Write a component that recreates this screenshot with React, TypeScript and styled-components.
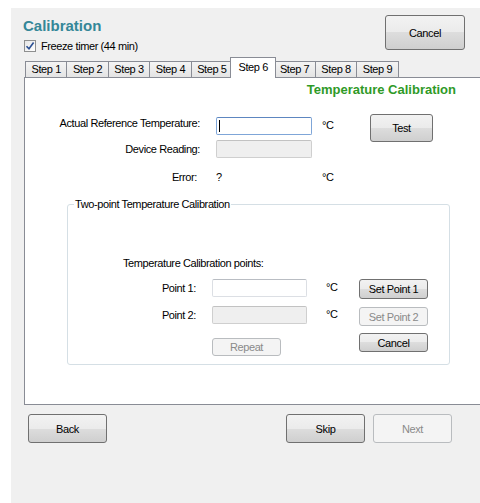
import React from "react";
import styled, { createGlobalStyle, css } from "styled-components";

const GlobalStyle = createGlobalStyle`
  html, body {
    margin: 0;
    padding: 0;
    background: #ffffff;
  }
  body {
    font-family: "Liberation Sans", Arial, sans-serif;
    font-size: 11px;
    color: #000000;
    letter-spacing: -0.4px;
  }
  * {
    box-sizing: border-box;
  }
`;

const Window = styled.div`
  margin: 8px 0 0 11px;
  width: 469px;
  height: 495px;
  background: #f0f0f0;
  overflow: hidden;
`;

const Header = styled.div`
  display: flex;
  justify-content: space-between;
  align-items: flex-start;
  height: 45px;
  padding: 0 15px 0 12px;
`;

const TitleBlock = styled.div`
  padding-top: 9px;
`;

const Title = styled.h1`
  margin: 0;
  font-size: 15px;
  line-height: 18px;
  font-weight: bold;
  letter-spacing: 0;
  color: #348798;
`;

const CheckRow = styled.label`
  display: flex;
  align-items: center;
  gap: 5px;
  height: 14px;
  margin-top: 4px;
  padding-left: 1px;
  line-height: 13px;
`;

const CheckBox = styled.span`
  display: flex;
  align-items: center;
  justify-content: center;
  width: 12px;
  height: 12px;
  border: 1px solid #8e8f8f;
  background: linear-gradient(135deg, #e6e6e6, #ffffff);
`;

const Button = styled.button<{ $w: number; $h: number; $top?: number }>`
  width: ${(p) => p.$w}px;
  height: ${(p) => p.$h}px;
  margin-top: ${(p) => p.$top ?? 0}px;
  padding: 0;
  font: inherit;
  letter-spacing: inherit;
  color: #000000;
  border: 1px solid #707070;
  border-radius: 3px;
  background: linear-gradient(
    to bottom,
    #f2f2f2 0%,
    #ebebeb 50%,
    #dddddd 50%,
    #cfcfcf 100%
  );

  &:disabled {
    color: #8a8a8a;
    border-color: #b9bcbf;
    background: #f4f4f4;
  }
`;

const TabStrip = styled.div`
  display: flex;
  align-items: flex-end;
  height: 21px;
  margin: 4px 0 0 14px;
`;

const Tab = styled.div<{ $active?: boolean }>`
  position: relative;
  height: 16px;
  margin: 0 0 1px -1px;
  padding: 0 5.5px;
  border: 1px solid #898c95;
  border-bottom: none;
  background: linear-gradient(to bottom, #f4f4f4, #e4e4e4);
  line-height: 15px;
  white-space: nowrap;

  &:first-child {
    margin-left: 0;
  }

  ${(p) =>
    p.$active &&
    css`
      z-index: 1;
      height: 21px;
      margin: 0 -2px 0 -3px;
      padding: 0 7.5px;
      background: #ffffff;
      line-height: 19px;
    `}
`;

const Panel = styled.div`
  margin: -1px 0 0 13px;
  width: 470px;
  height: 328px;
  padding-top: 4px;
  background: #ffffff;
  border: 1px solid #898c95;
`;

const Heading = styled.h2`
  margin: 0;
  width: 431px;
  font-size: 13px;
  line-height: 16px;
  font-weight: bold;
  letter-spacing: 0;
  text-align: right;
  color: #2f9a27;
`;

const ReadingGrid = styled.div`
  display: grid;
  grid-template-columns: 191px 106px 48px 63px;
  grid-template-rows: 23px 31px 13px;
  align-items: start;
  margin-top: 19px;
`;

const FieldLabel = styled.span<{ $top?: number; $pad?: number }>`
  grid-column: 1;
  margin-top: ${(p) => p.$top ?? 0}px;
  padding-right: ${(p) => p.$pad ?? 16}px;
  line-height: 13px;
  text-align: right;
  white-space: nowrap;
`;

const Value = styled.span<{ $top?: number }>`
  margin-top: ${(p) => p.$top ?? 0}px;
  line-height: 13px;
`;

const TextBox = styled.div<{ $w: number; $state: "focus" | "normal" | "disabled"; $top?: number }>`
  display: flex;
  align-items: center;
  width: ${(p) => p.$w}px;
  height: 18px;
  margin-top: ${(p) => p.$top ?? 0}px;
  padding-left: 2px;
  border: 1px solid #dcdfe4;
  border-top-color: #b9bdc3;
  border-radius: 2px;
  background: #ffffff;

  ${(p) =>
    p.$state === "focus" &&
    css`
      border-color: #7fa6d8;
      border-top-color: #5d86c0;
    `}

  ${(p) =>
    p.$state === "disabled" &&
    css`
      border-color: #cfcfcf;
      border-top-color: #c2c2c2;
      background: #efefef;
    `}
`;

const Caret = styled.span`
  width: 1px;
  height: 12px;
  background: #000000;
`;

const GroupBox = styled.fieldset`
  margin: 14px 0 0 42px;
  width: 383px;
  height: 167px;
  min-inline-size: 0;
  padding: 0;
  border: 1px solid #d5dfe5;
  border-radius: 3px;
`;

const GroupTitle = styled.legend`
  margin-left: 6px;
  padding: 0 1px;
  line-height: 13px;
`;

const PointsCaption = styled.div`
  margin: 46px 0 0 55px;
  line-height: 13px;
`;

const PointGrid = styled.div`
  display: grid;
  grid-template-columns: 144px 114px 33px 69px;
  grid-template-rows: 27px 27px 20px;
  align-items: start;
  margin-top: 9px;
`;

const Footer = styled.div`
  display: flex;
  justify-content: space-between;
  padding: 9px 28px 0 17px;
`;

const FooterGroup = styled.div`
  display: flex;
  gap: 8px;
`;

const steps = ["Step 1", "Step 2", "Step 3", "Step 4", "Step 5", "Step 6", "Step 7", "Step 8", "Step 9"];

const CheckMark = () => (
  <svg width="10" height="10" viewBox="0 0 10 10">
    <path d="M1.5 5.2 L4 7.8 L8.6 1.6" fill="none" stroke="#2b4f93" strokeWidth="1.6" />
  </svg>
);

const App = () => {
  return (
    <>
      <GlobalStyle />
      <Window>
        <Header>
          <TitleBlock>
            <Title>Calibration</Title>
            <CheckRow>
              <CheckBox>
                <CheckMark />
              </CheckBox>
              Freeze timer (44 min)
            </CheckRow>
          </TitleBlock>
          <Button $w={80} $h={35} $top={7}>
            Cancel
          </Button>
        </Header>

        <TabStrip>
          {steps.map((step) => (
            <Tab key={step} $active={step === "Step 6"}>
              {step}
            </Tab>
          ))}
        </TabStrip>

        <Panel>
          <Heading>Temperature Calibration</Heading>

          <ReadingGrid>
            <FieldLabel>Actual Reference Temperature:</FieldLabel>
            <TextBox $w={96} $state="focus">
              <Caret />
            </TextBox>
            <Value $top={2}>°C</Value>
            <Button $w={63} $h={28} $top={-3}>
              Test
            </Button>

            <FieldLabel $top={3}>Device Reading:</FieldLabel>
            <TextBox $w={96} $state="disabled" />

            <FieldLabel $pad={19}>Error:</FieldLabel>
            <Value>?</Value>
            <Value>°C</Value>
          </ReadingGrid>

          <GroupBox>
            <GroupTitle>Two-point Temperature Calibration</GroupTitle>
            <PointsCaption>Temperature Calibration points:</PointsCaption>
            <PointGrid>
              <FieldLabel $top={3}>Point 1:</FieldLabel>
              <TextBox $w={95} $state="normal" />
              <Value $top={2}>°C</Value>
              <Button $w={69} $h={20}>
                Set Point 1
              </Button>

              <FieldLabel $top={3}>Point 2:</FieldLabel>
              <TextBox $w={95} $state="disabled" />
              <Value $top={2}>°C</Value>
              <Button $w={69} $h={19} $top={1} disabled>
                Set Point 2
              </Button>

              <span />
              <Button $w={69} $h={18} $top={5} disabled>
                Repeat
              </Button>
              <span />
              <Button $w={69} $h={19}>
                Cancel
              </Button>
            </PointGrid>
          </GroupBox>
        </Panel>

        <Footer>
          <Button $w={79} $h={29}>
            Back
          </Button>
          <FooterGroup>
            <Button $w={79} $h={29}>
              Skip
            </Button>
            <Button $w={79} $h={29} disabled>
              Next
            </Button>
          </FooterGroup>
        </Footer>
      </Window>
    </>
  );
};

export default App;
